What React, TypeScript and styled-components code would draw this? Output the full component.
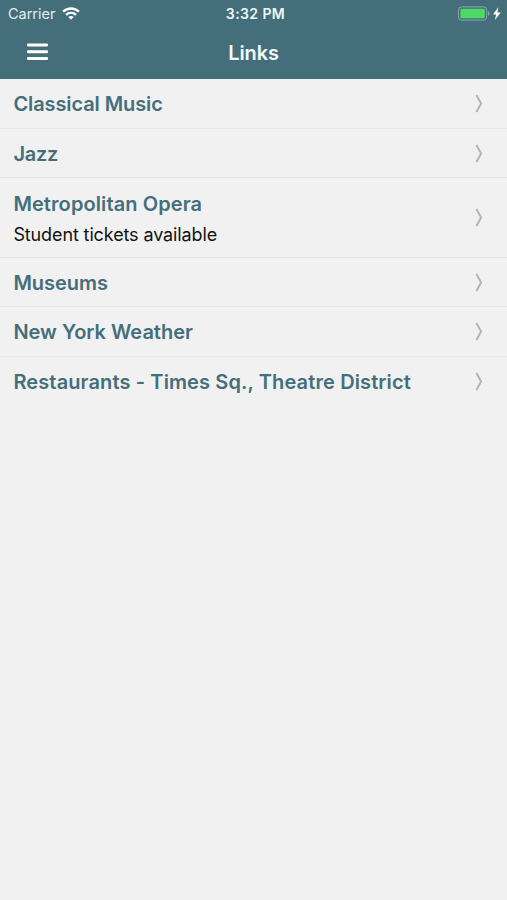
import React from "react";
import styled, { createGlobalStyle } from "styled-components";

const GlobalStyle = createGlobalStyle`
  * { box-sizing: border-box; }
  body { margin: 0; background: #f1f1f1; }
`;

const Screen = styled.div`
  width: 100%;
  height: 900px;
  overflow: hidden;
  background: #f1f1f1;
  font-family: Inter, "Liberation Sans", sans-serif;
`;

const Header = styled.header`
  height: 79px;
  background: #456e7b;
  color: #fff;
`;

const StatusBar = styled.div`
  display: grid;
  grid-template-columns: 1fr auto 1fr;
  align-items: center;
  height: 27px;
  padding: 0 6px 0 8px;
`;

const StatusLeft = styled.div`
  display: flex;
  align-items: center;
  gap: 7px;
`;

const StatusRight = styled.div`
  display: flex;
  justify-content: flex-end;
`;

const Carrier = styled.span`
  font-size: 14.5px;
  line-height: 27px;
  color: #e2edf3;
  letter-spacing: -0.03px;
`;

const Clock = styled.time`
  padding-left: 2px;
  font-size: 14px;
  line-height: 27px;
  font-weight: 600;
  color: #eef6fa;
  letter-spacing: 0.4px;
`;

const NavBar = styled.div`
  display: grid;
  grid-template-columns: 1fr auto 1fr;
  align-items: center;
  height: 50px;
`;

const MenuButton = styled.button`
  display: flex;
  justify-self: start;
  margin: 0 0 0 27px;
  padding: 0;
  border: 0;
  background: none;
`;

const Title = styled.h1`
  margin: 0;
  padding-top: 2px;
  font-size: 20px;
  line-height: 48px;
  font-weight: 600;
  color: #f3fafd;
  letter-spacing: -0.1px;
`;

const List = styled.ul`
  margin: 0;
  padding: 0;
  list-style: none;
`;

const Row = styled.li<{ $tall?: boolean }>`
  display: flex;
  align-items: center;
  justify-content: space-between;
  height: ${(p) => (p.$tall ? "79.4px" : "49.6px")};
  padding: 1px 24px 0 13.4px;
  border-bottom: 1px solid #e5e6e6;

  &:last-child { border-bottom-color: transparent; }
`;

const RowText = styled.div<{ $tall?: boolean }>`
  padding-top: ${(p) => (p.$tall ? "2px" : "0")};
`;

const Name = styled.div<{ $spacing: number }>`
  padding-top: 1px;
  font-size: 20px;
  line-height: 30px;
  font-weight: 600;
  color: #456e7b;
  white-space: nowrap;
  letter-spacing: ${(p) => p.$spacing}px;
`;

const Note = styled.div`
  font-size: 18px;
  line-height: 31px;
  color: #111;
  letter-spacing: -0.12px;
`;

type Link = { name: string; note?: string; spacing: number };

const links: Link[] = [
  { name: "Classical Music", spacing: -0.1 },
  { name: "Jazz", spacing: -0.25 },
  { name: "Metropolitan Opera", note: "Student tickets available", spacing: 0.1 },
  { name: "Museums", spacing: -0.04 },
  { name: "New York Weather", spacing: -0.01 },
  { name: "Restaurants - Times Sq., Theatre District", spacing: 0.12 },
];

const WifiIcon = () => (
  <svg width="18" height="13" viewBox="0 0 18 13" fill="none" stroke="#fff" strokeWidth="2.3">
    <path d="M1.1 4.7C5.6.4 12.4.4 16.9 4.7" />
    <path d="M4 7.8C6.9 5.1 11.1 5.1 14 7.8" />
    <path d="M6.3 10.1C7.9 8.7 10.1 8.7 11.7 10.1L9 12.7Z" fill="#fff" stroke="none" />
  </svg>
);

const BatteryIcon = () => (
  <svg width="43" height="15" viewBox="0 0 43 15">
    <rect x=".5" y=".9" width="28.2" height="13.2" rx="3" fill="none" stroke="#8ba6b2" />
    <rect x="2.4" y="2.8" width="24.4" height="9.4" rx="1.2" fill="#4cd964" />
    <path d="M30 5.2C32 5.8 32 9.2 30 9.8Z" fill="#8ba6b2" />
    <path d="M40.3 1.2L35 8.5H38.2L36.9 13.9L42.7 6.4H39.4Z" fill="#fff" />
  </svg>
);

const MenuIcon = () => (
  <svg width="21" height="18" viewBox="0 0 21 18" fill="#fff">
    <rect y="0.4" width="21" height="3" rx="1.1" />
    <rect y="7.2" width="21" height="3" rx="1.1" />
    <rect y="14" width="21" height="3" rx="1.1" />
  </svg>
);

const ChevronIcon = () => (
  <svg width="8" height="19" viewBox="0 0 8 19" fill="none" stroke="#b3b3b3" strokeWidth="1.9">
    <path d="M1.4 1L6.1 9.5L1.4 18" />
  </svg>
);

export default function App() {
  return (
    <Screen>
      <GlobalStyle />
      <Header>
        <StatusBar>
          <StatusLeft>
            <Carrier>Carrier</Carrier>
            <WifiIcon />
          </StatusLeft>
          <Clock>3:32 PM</Clock>
          <StatusRight>
            <BatteryIcon />
          </StatusRight>
        </StatusBar>
        <NavBar>
          <MenuButton aria-label="Menu">
            <MenuIcon />
          </MenuButton>
          <Title>Links</Title>
        </NavBar>
      </Header>
      <List>
        {links.map((link) => (
          <Row key={link.name} $tall={!!link.note}>
            <RowText $tall={!!link.note}>
              <Name $spacing={link.spacing}>{link.name}</Name>
              {link.note && <Note>{link.note}</Note>}
            </RowText>
            <ChevronIcon />
          </Row>
        ))}
      </List>
    </Screen>
  );
}
